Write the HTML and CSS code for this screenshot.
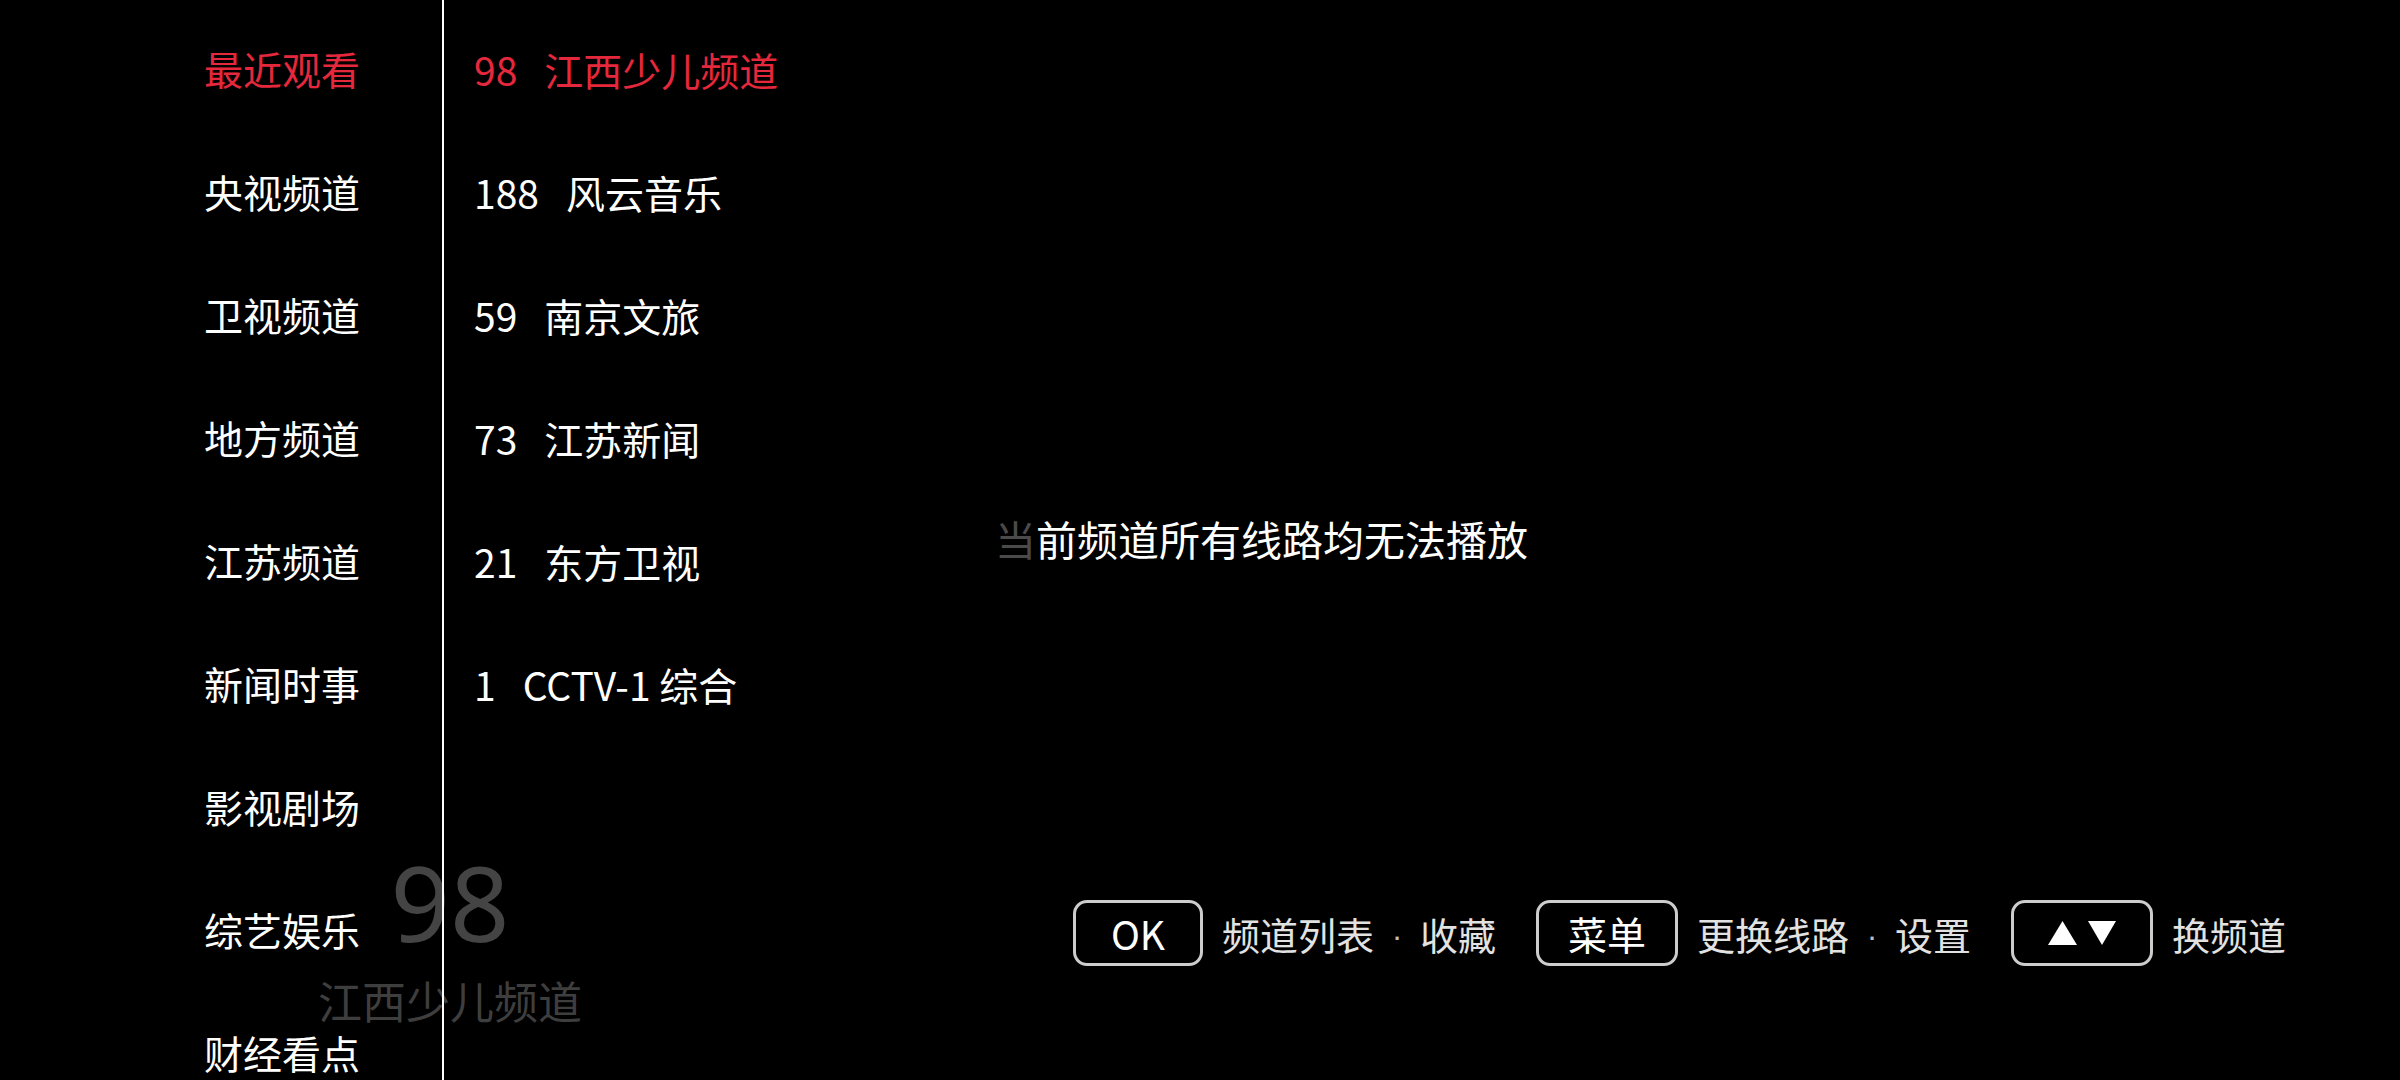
FILE: index.html
```html
<!DOCTYPE html>
<html lang="zh-CN">
<head>
<meta charset="utf-8">
<title>频道列表</title>
<link rel="stylesheet" href="styles.css">
</head>
<body>
<div class="screen">
  <aside class="categories">
    <div class="cat-item active">最近观看</div>
    <div class="cat-item">央视频道</div>
    <div class="cat-item">卫视频道</div>
    <div class="cat-item">地方频道</div>
    <div class="cat-item">江苏频道</div>
    <div class="cat-item">新闻时事</div>
    <div class="cat-item">影视剧场</div>
    <div class="cat-item">综艺娱乐</div>
    <div class="cat-item">财经看点</div>
  </aside>
  <section class="channels">
    <div class="ch-item active"><span class="ch-num">98</span><span class="ch-name">江西少儿频道</span></div>
    <div class="ch-item"><span class="ch-num">188</span><span class="ch-name">风云音乐</span></div>
    <div class="ch-item"><span class="ch-num">59</span><span class="ch-name">南京文旅</span></div>
    <div class="ch-item"><span class="ch-num">73</span><span class="ch-name">江苏新闻</span></div>
    <div class="ch-item"><span class="ch-num">21</span><span class="ch-name">东方卫视</span></div>
    <div class="ch-item"><span class="ch-num">1</span><span class="ch-name">CCTV-1 综合</span></div>
  </section>
  <main class="player">
    <div class="message"><span class="fade">当</span>前频道所有线路均无法播放</div>
    <div class="hints">
      <span class="key key-ok">OK</span>
      <span class="hint-label">频道列表<span class="dot">·</span>收藏</span>
      <span class="key key-menu">菜单</span>
      <span class="hint-label">更换线路<span class="dot">·</span>设置</span>
      <span class="key key-arrows">
        <svg class="arrows" width="68" height="24" viewBox="0 0 68 24">
          <polygon points="0,24 14.5,0 29,24" fill="#fff"/>
          <polygon points="40,0 68,0 54,24" fill="#fff"/>
        </svg>
      </span>
      <span class="hint-label last">换频道</span>
    </div>
  </main>
  <div class="now-playing">
    <div class="np-num">98</div>
    <div class="np-name">江西少儿频道</div>
  </div>
</div>
</body>
</html>
```

FILE: styles.css
```css
html, body {
  margin: 0;
  padding: 0;
  background: #000;
}

body {
  font-family: "Noto Sans CJK SC", "Noto Sans", sans-serif;
  color: #fff;
}

.screen {
  position: relative;
  width: 2400px;
  height: 1080px;
  overflow: hidden;
  display: flex;
  background: #000;
}

.categories {
  position: relative;
  z-index: 2;
  width: 442px;
  flex: none;
  border-right: 2px solid #fff;
  padding-top: 7px;
}

.cat-item {
  height: 123px;
  line-height: 123px;
  padding-left: 204px;
  font-size: 39px;
  color: #fff;
  white-space: nowrap;
}

.cat-item.active,
.ch-item.active {
  color: #e5283c;
}

.channels {
  width: 470px;
  flex: none;
  padding-top: 7px;
  padding-left: 30px;
  position: relative;
  z-index: 2;
}

.ch-item {
  height: 123px;
  display: flex;
  align-items: center;
  font-size: 39px;
  color: #fff;
  white-space: nowrap;
}

.ch-num {
  margin-right: 27px;
}

.player {
  flex: 1;
  display: flex;
  flex-direction: column;
  position: relative;
  z-index: 2;
}

.message {
  margin-top: 508px;
  padding-left: 51px;
  height: 60px;
  line-height: 60px;
  font-size: 41px;
  color: #fff;
  white-space: nowrap;
}

.message .fade {
  color: #4a4a4a;
}

.hints {
  margin-top: 332px;
  padding-left: 129px;
  display: flex;
  align-items: center;
  height: 66px;
}

.key {
  box-sizing: border-box;
  height: 66px;
  border: 3px solid #cdcdcd;
  border-radius: 14px;
  display: flex;
  align-items: center;
  justify-content: center;
  font-size: 39px;
  color: #fff;
  line-height: 1;
}

.key-ok {
  width: 130px;
}

.key-menu {
  width: 142px;
}

.key-arrows {
  width: 142px;
}

.arrows {
  display: block;
}

.hint-label {
  margin-left: 19px;
  margin-right: 40px;
  font-size: 38px;
  color: #e2e2e2;
  white-space: nowrap;
}

.hint-label.last {
  margin-right: 0;
}

.dot {
  display: inline-block;
  width: 46px;
  text-align: center;
  font-family: "Liberation Sans", sans-serif;
  font-size: 32px;
  color: #bdbdbd;
  vertical-align: 3px;
}

.now-playing {
  position: absolute;
  z-index: 1;
  left: 300px;
  top: 842px;
  width: 300px;
  text-align: center;
  color: #444;
}

.np-num {
  font-family: "Noto Sans", "Noto Sans CJK SC", sans-serif;
  font-size: 104px;
  line-height: 120px;
  height: 120px;
}

.np-name {
  font-size: 44px;
  line-height: 60px;
  color: #3e3e3e;
  margin-top: 8px;
}
```
